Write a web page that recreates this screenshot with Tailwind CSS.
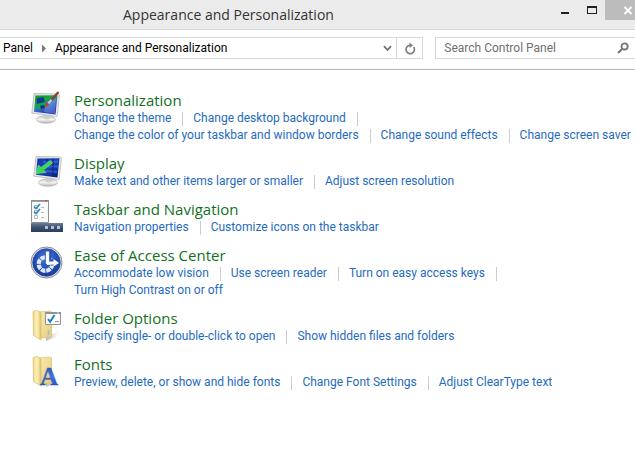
<!DOCTYPE html>
<html lang="en">
<head>
<meta charset="utf-8">
<meta name="viewport" content="width=device-width, initial-scale=1">
<title>Appearance and Personalization</title>
<script src="https://cdn.jsdelivr.net/npm/@tailwindcss/browser@4"></script>
</head>
<body class="min-h-screen overflow-x-hidden bg-white font-[Roboto,sans-serif] text-[12px] leading-[17px] text-black">
<svg class="absolute h-0 w-0" aria-hidden="true">
  <defs>
    <linearGradient id="screen" x1="0" y1="0" x2="1" y2="1"><stop offset="0" stop-color="#1237a8"/><stop offset=".5" stop-color="#1c46b8"/><stop offset="1" stop-color="#0a1f78"/></linearGradient>
    <linearGradient id="wall" x1="0" y1="0" x2=".6" y2="1"><stop offset="0" stop-color="#0c9a1c"/><stop offset=".4" stop-color="#18a838"/><stop offset=".6" stop-color="#3a6cc8"/><stop offset="1" stop-color="#1a2cae"/></linearGradient>
    <linearGradient id="frame" x1="0" y1="0" x2="1" y2="1"><stop offset="0" stop-color="#d9dcdf"/><stop offset="1" stop-color="#f3f3f3"/></linearGradient>
    <linearGradient id="base" x1="0" y1="0" x2="0" y2="1"><stop offset="0" stop-color="#c9c9c9"/><stop offset=".5" stop-color="#f4f4f4"/><stop offset="1" stop-color="#b4b4b4"/></linearGradient>
    <linearGradient id="bar" x1="0" y1="0" x2="0" y2="1"><stop offset="0" stop-color="#6b7e9a"/><stop offset=".45" stop-color="#3e5172"/><stop offset="1" stop-color="#2b3c5a"/></linearGradient>
    <radialGradient id="ball" cx=".5" cy=".35" r=".65"><stop offset="0" stop-color="#4b7bd8"/><stop offset=".6" stop-color="#2350b8"/><stop offset="1" stop-color="#183a98"/></radialGradient>
    <linearGradient id="back" x1="0" y1="0" x2="1" y2="1"><stop offset="0" stop-color="#f9edb4"/><stop offset="1" stop-color="#e8cc78"/></linearGradient>
    <linearGradient id="flap" x1="0" y1="0" x2="1" y2="0"><stop offset="0" stop-color="#efd988"/><stop offset=".5" stop-color="#fbf1bd"/><stop offset="1" stop-color="#e2c46c"/></linearGradient>
    <linearGradient id="letter" x1="0" y1="0" x2="0" y2="1"><stop offset="0" stop-color="#2b4fae"/><stop offset=".5" stop-color="#3f74de"/><stop offset="1" stop-color="#1d48b4"/></linearGradient>
    <linearGradient id="shade" x1="0" y1="0" x2="1" y2="0"><stop offset="0" stop-color="#888" stop-opacity=".6"/><stop offset="1" stop-color="#ccc" stop-opacity="0"/></linearGradient>
    <g id="monitor">
      <ellipse cx="15" cy="28.5" rx="9.500" ry="3.800" fill="url(#base)" stroke="#a9a9a9" stroke-width=".6"/>
      <path d="M12.500 23l7 1v3.500q-4 2-7 0z" fill="#cfcfcf"/>
      <path d="M3 2.500L27.500 3l1 1-2.500 21.500L0.800 22.200z" fill="url(#frame)" stroke="#aeb2b6" stroke-width=".7"/>
    </g>
    <g id="folder">
      <path d="M16 28l14-7-4 7-10 4z" fill="url(#shade)"/>
      <path d="M9 3l11.500-1 1 1v25l-12 1z" fill="url(#back)" stroke="#d8bd68" stroke-width=".7"/>
      <path d="M3 3.500q0-1 1-1.300l3-.7 4 2.500v27L3.500 26.500z" fill="url(#flap)" stroke="#d8bd68" stroke-width=".7"/>
    </g>
  </defs>
</svg>

<header class="flex h-[30px] items-start border-b border-[#d9d9d9] bg-[#ebebeb]">
  <h1 class="flex-1 pl-[123px] font-['Open_Sans',sans-serif] text-[14px] leading-[29px] text-[#333]">Appearance and Personalization</h1>
  <button type="button" aria-label="Minimize" class="flex h-5 w-[27px] justify-center">
    <svg class="h-5 w-[27px]" viewBox="0 0 27 20"><path d="M9 12h8v2H9z" fill="#1f1f1f"/></svg>
  </button>
  <button type="button" aria-label="Maximize" class="h-5 w-[26px]">
    <svg class="h-5 w-[26px]" viewBox="0 0 26 20"><path fill-rule="evenodd" d="M8 6h10v8H8zM9 8v5h8V8z" fill="#1f1f1f"/></svg>
  </button>
  <button type="button" aria-label="Close" class="h-5 w-[30px] bg-[#bcbcbc]">
    <svg class="h-5 w-[30px]" viewBox="0 0 30 20"><path d="M19.500 7l7 7m0-7l-7 7" stroke="#fff" stroke-width="1.800"/></svg>
  </button>
</header>

<div class="flex h-10 items-start gap-3 border-b border-[#b4b4b4] pt-[7px]">
  <nav aria-label="Address" class="flex h-[22px] w-2/3 items-stretch border border-l-0 border-[#d9d9d9]">
    <div class="flex flex-1 items-center pl-[3px]">
      <a href="#">Panel</a>
      <svg class="mx-2 h-[9px] w-[6px]" viewBox="0 0 6 9"><path d="M1 .500v8l4-4z" fill="#7a7a7a"/></svg>
      <a href="#">Appearance and Personalization</a>
    </div>
    <button type="button" aria-label="Previous locations" class="flex w-[18px] items-center justify-center">
      <svg class="h-[7px] w-[9px]" viewBox="0 0 9 7"><path d="M1 1.200l3.500 3.800L8 1.200" fill="none" stroke="#707070" stroke-width="1.800"/></svg>
    </button>
    <button type="button" aria-label="Refresh" class="flex w-[26px] items-center justify-center border-l border-[#d9d9d9]">
      <svg class="h-[13px] w-[12px]" viewBox="0 0 12 13"><path d="M9.600 5A4.200 4.200 0 1 1 6 3.300" fill="none" stroke="#7c7c7c" stroke-width="1.600"/><path d="M5.500 .500l3.500 3L5.500 6z" fill="#7c7c7c"/></svg>
    </button>
  </nav>
  <form role="search" class="flex h-[22px] flex-1 items-center border border-r-0 border-[#d9d9d9] pr-[6px] pl-2">
    <input type="search" aria-label="Search Control Panel" placeholder="Search Control Panel" class="w-0 flex-1 outline-none placeholder:text-[#707070]">
    <svg class="h-3 w-3" viewBox="0 0 12 12"><circle cx="7.600" cy="4.400" r="3.100" fill="none" stroke="#777" stroke-width="1.800"/><path d="M5.400 6.800L1 11" stroke="#777" stroke-width="2.200"/></svg>
  </form>
</div>

<main class="flex flex-col gap-[9px] pt-5 pl-[30px] text-[#1f6bbf]">
  <section class="flex gap-3">
    <svg class="h-8 w-8 shrink-0 overflow-visible" viewBox="0 0 32 32" aria-hidden="true">
      <g transform="translate(1 1)">
      <use href="#monitor"/>
      <path d="M4.500 4.500l22-.2-2 19.200L3 20.800z" fill="url(#wall)"/>
      <path d="M14 16l11-9-1 16-11-2z" fill="#8fb6ea" opacity=".4"/>
      <path d="M5.500 7.500l7-1.500 1.500 5-8 2z" fill="#123a9c"/><path d="M7 13l6-1.500 2 4-4 3-4-1z" fill="#0fae30"/><path d="M9 15l4-1 1 3-4 1z" fill="#0b2c9a"/>
      <path d="M27.500 1L19.500 10" stroke="#8a4030" stroke-width="2.200"/><path d="M20.500 8.800L17 12.800" stroke="#c9ccd8" stroke-width="2.200"/><path d="M16.300 11.500l1.700 1.500q-1 3-5 3 1.500-3 3.300-4.500z" fill="#d33a2a"/>
      </g>
    </svg>
    <div>
      <h2 class="font-['Open_Sans',sans-serif] text-[15px] leading-[20px] text-[#12701d]"><a href="#">Personalization</a></h2>
      <div class="flex items-center whitespace-nowrap"><a href="#">Change the theme</a><i class="mr-[10px] ml-[11px] h-[14px] w-px bg-[#ccc]"></i><a href="#">Change desktop background</a><i class="mr-[10px] ml-[11px] h-[14px] w-px bg-[#ccc]"></i></div>
      <div class="flex items-center whitespace-nowrap"><a href="#">Change the color of your taskbar and window borders</a><i class="mr-[10px] ml-[11px] h-[14px] w-px bg-[#ccc]"></i><a href="#">Change sound effects</a><i class="mr-[10px] ml-[11px] h-[14px] w-px bg-[#ccc]"></i><a href="#">Change screen saver</a></div>
    </div>
  </section>

  <section class="flex gap-3">
    <svg class="h-8 w-8 shrink-0 overflow-visible" viewBox="0 0 32 32" aria-hidden="true">
      <g transform="translate(3 1)">
      <use href="#monitor"/>
      <path d="M4.500 4.500l22-.2-2 19.200L3 20.800z" fill="url(#screen)"/>
      <path d="M10 8l15-.5M11 12.500h14M12 17l12 1" stroke="#3a78e0" stroke-width="2" opacity=".6"/>
      <path d="M14 5v3M20 5v18" stroke="#0a1a66" stroke-width="1.500" opacity=".5"/>
      <path d="M17.500 6.500l2 2.500-9 7 2.500 2.500-10 1 2.500-8.500 2.500 2.500z" fill="#35d84a" stroke="#7fe888" stroke-width=".6"/>
      </g>
    </svg>
    <div>
      <h2 class="font-['Open_Sans',sans-serif] text-[15px] leading-[20px] text-[#12701d]"><a href="#">Display</a></h2>
      <div class="flex items-center whitespace-nowrap"><a href="#">Make text and other items larger or smaller</a><i class="mr-[10px] ml-[11px] h-[14px] w-px bg-[#ccc]"></i><a href="#">Adjust screen resolution</a></div>
    </div>
  </section>

  <section class="flex gap-3">
    <svg class="h-8 w-8 shrink-0 overflow-visible" viewBox="0 0 32 32" aria-hidden="true">
      <path d="M1.500 1.500h17v22h-17z" fill="#fafafa" stroke="#8f8f8f"/><path d="M1 1h18v1.800H1z" fill="#8f8f8f"/><path d="M15 1h2v1.500h-2z" fill="#c0504a"/>
      <path d="M4.500 6.500h3v3h-3zM4.500 11.500h3v3h-3zM4.500 16.500h3v3h-3z" fill="#fff" stroke="#b4b4b4"/>
      <path d="M4 7.500l2 2 4-4.500M4 12.500l2 2 4-4.500" fill="none" stroke="#2f8fc4" stroke-width="1.700"/>
      <path d="M11 8.500h3M11 13.500h3M11 18.500h3" stroke="#bbb"/>
      <path d="M1 24h32v9H1z" fill="url(#bar)"/><path d="M15 27h3v3h-3zM21 27h3v3h-3zM27 27h3v3h-3z" fill="#b4c0d2"/>
    </svg>
    <div>
      <h2 class="font-['Open_Sans',sans-serif] text-[15px] leading-[20px] text-[#12701d]"><a href="#">Taskbar and Navigation</a></h2>
      <div class="flex items-center whitespace-nowrap"><a href="#">Navigation properties</a><i class="mr-[10px] ml-[11px] h-[14px] w-px bg-[#ccc]"></i><a href="#">Customize icons on the taskbar</a></div>
    </div>
  </section>

  <section class="flex gap-3">
    <svg class="h-8 w-8 shrink-0 overflow-visible" viewBox="0 0 32 32" aria-hidden="true">
      <g transform="translate(0 1)">
      <circle cx="16.500" cy="16.500" r="15.500" fill="#e9edf3" stroke="#7f8796"/>
      <circle cx="16.500" cy="16.500" r="13.800" fill="url(#ball)" stroke="#27458e" stroke-width=".8"/>
      <circle cx="15.500" cy="18" r="6.800" fill="none" stroke="#dfe8f8" stroke-width="4.200" stroke-dasharray="4.500 .840"/>
      <path d="M15 17V5h6v8.500l3-1.500 6 5-5 4-2-1.500-8-.5z" fill="#2450b4"/>
      <path d="M15.800 5.500h3.400V15.500h4.300V13l5.500 4-5.500 3.500V18.500l-6 .5-1.700-1.500z" fill="#fff"/>
      </g>
    </svg>
    <div>
      <h2 class="font-['Open_Sans',sans-serif] text-[15px] leading-[20px] text-[#12701d]"><a href="#">Ease of Access Center</a></h2>
      <div class="flex items-center whitespace-nowrap"><a href="#">Accommodate low vision</a><i class="mr-[10px] ml-[11px] h-[14px] w-px bg-[#ccc]"></i><a href="#">Use screen reader</a><i class="mr-[10px] ml-[11px] h-[14px] w-px bg-[#ccc]"></i><a href="#">Turn on easy access keys</a><i class="mr-[10px] ml-[11px] h-[14px] w-px bg-[#ccc]"></i></div>
      <div class="flex items-center whitespace-nowrap"><a href="#">Turn High Contrast on or off</a></div>
    </div>
  </section>

  <section class="flex gap-3">
    <svg class="h-8 w-8 shrink-0 overflow-visible" viewBox="0 0 32 32" aria-hidden="true">
      <g transform="translate(0 1)">
      <use href="#folder"/>
      <path d="M18.500 21v5" stroke="#8fc0e0" stroke-width="1.500"/>
      <path d="M15.500 3.500h15v12h-15z" fill="#fff" stroke="#8d949c"/><path d="M15 3h16v2H15z" fill="#8d949c"/><path d="M27 3.500h1.500v1H27z" fill="#fff"/>
      <path d="M18 10l2.200 2.800L24.500 6" fill="none" stroke="#1f80bc" stroke-width="2"/><path d="M25 12.500h4" stroke="#999"/>
      </g>
    </svg>
    <div>
      <h2 class="font-['Open_Sans',sans-serif] text-[15px] leading-[20px] text-[#12701d]"><a href="#">Folder Options</a></h2>
      <div class="flex items-center whitespace-nowrap"><a href="#">Specify single- or double-click to open</a><i class="mr-[10px] ml-[11px] h-[14px] w-px bg-[#ccc]"></i><a href="#">Show hidden files and folders</a></div>
    </div>
  </section>

  <section class="flex gap-3">
    <svg class="h-8 w-8 shrink-0 overflow-visible" viewBox="0 0 32 32" aria-hidden="true">
      <g transform="translate(0 1)">
      <use href="#folder"/>
      <text x="10" y="30" font-family="Liberation Serif, serif" font-weight="700" font-size="25" fill="url(#letter)" stroke="#2a55b8" stroke-width=".4">A</text>
      </g>
    </svg>
    <div>
      <h2 class="font-['Open_Sans',sans-serif] text-[15px] leading-[20px] text-[#12701d]"><a href="#">Fonts</a></h2>
      <div class="flex items-center whitespace-nowrap"><a href="#">Preview, delete, or show and hide fonts</a><i class="mr-[10px] ml-[11px] h-[14px] w-px bg-[#ccc]"></i><a href="#">Change Font Settings</a><i class="mr-[10px] ml-[11px] h-[14px] w-px bg-[#ccc]"></i><a href="#">Adjust ClearType text</a></div>
    </div>
  </section>
</main>
</body>
</html>
